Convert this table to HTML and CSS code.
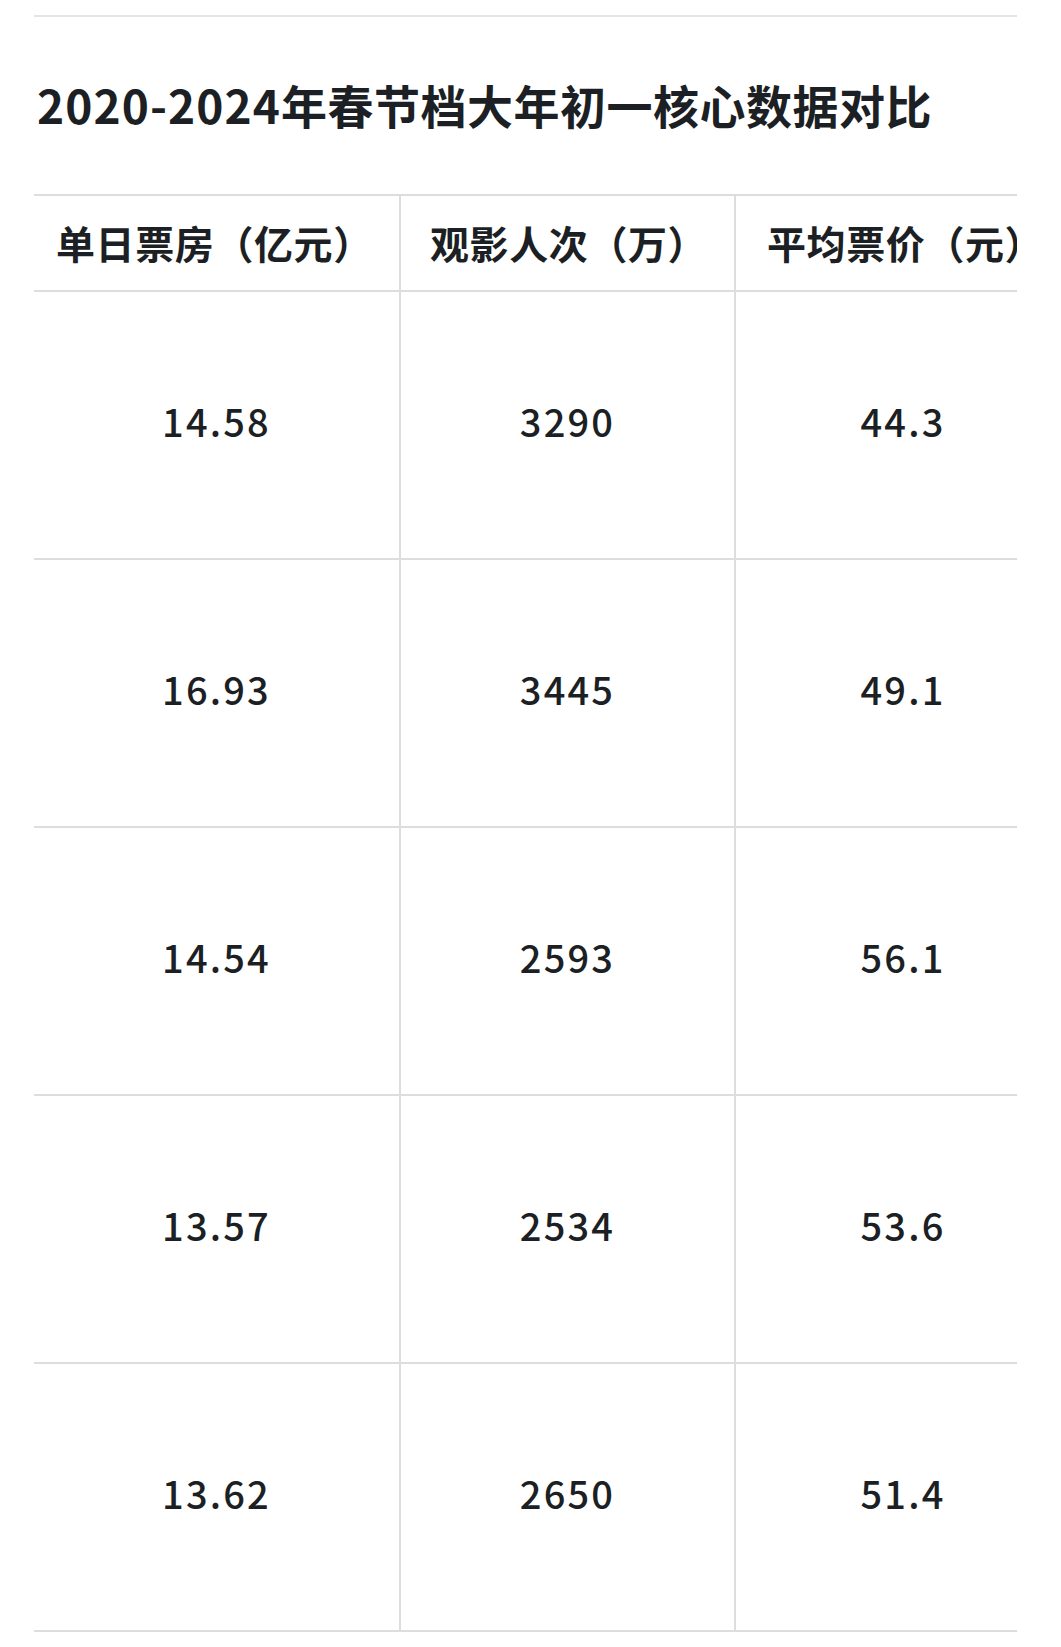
FILE: index.html
```html
<!DOCTYPE html>
<html lang="zh-CN">
<head>
<meta charset="utf-8">
<title>2020-2024年春节档大年初一核心数据对比</title>
<link rel="stylesheet" href="styles.css">
</head>
<body>
<div class="page">
  <div class="rule"></div>
  <h2 class="title"><span class="title-num">2020-2024</span>年春节档大年初一核心数据对比</h2>
  <div class="table-wrap">
    <table class="data">
      <colgroup>
        <col class="c1"><col class="c2"><col class="c3">
      </colgroup>
      <thead>
        <tr>
          <th class="h1">单日票房（亿元）</th>
          <th class="h2">观影人次（万）</th>
          <th class="h3">平均票价（元）</th>
        </tr>
      </thead>
      <tbody>
        <tr><td>14.58</td><td>3290</td><td>44.3</td></tr>
        <tr><td>16.93</td><td>3445</td><td>49.1</td></tr>
        <tr><td>14.54</td><td>2593</td><td>56.1</td></tr>
        <tr><td>13.57</td><td>2534</td><td>53.6</td></tr>
        <tr><td>13.62</td><td>2650</td><td>51.4</td></tr>
      </tbody>
    </table>
  </div>
</div>
</body>
</html>
```
FILE: styles.css
```css
html, body {
  margin: 0;
  padding: 0;
  background: #ffffff;
}

body {
  font-family: "Noto Sans CJK SC", "Noto Sans", sans-serif;
  color: #1c1f24;
}

.page {
  display: flex;
  flex-direction: column;
  padding: 15px 44px 0 34px;
}

.rule {
  height: 2px;
  background: #e4e4e4;
}

.title {
  margin: 57px 0 0 3px;
  font-size: 46px;
  line-height: 60px;
  font-weight: 700;
  letter-spacing: 0.5px;
}

.title-num {
  letter-spacing: 1.1px;
}

.table-wrap {
  margin-top: 60px;
  overflow: hidden;
}

.data {
  border-collapse: collapse;
  table-layout: fixed;
  width: 1036px;
}

.c1 { width: 366px; }
.c2 { width: 335px; }
.c3 { width: 335px; }

.data th,
.data td {
  border-top: 2px solid #dddddd;
  border-bottom: 2px solid #dddddd;
  padding: 0;
}

.data th + th,
.data td + td {
  border-left: 2px solid #dddddd;
}

.data th {
  height: 91px;
  padding-bottom: 3px;
  text-align: left;
  font-size: 39px;
  font-weight: 700;
  letter-spacing: 0.6px;
  white-space: nowrap;
}

.data .h1 { padding-left: 22px; }
.data .h2 { padding-left: 29px; }
.data .h3 { padding-left: 31px; }

.data td {
  height: 256px;
  padding-bottom: 10px;
  text-align: center;
  font-size: 38px;
  font-weight: 500;
  letter-spacing: 2.2px;
}
```
